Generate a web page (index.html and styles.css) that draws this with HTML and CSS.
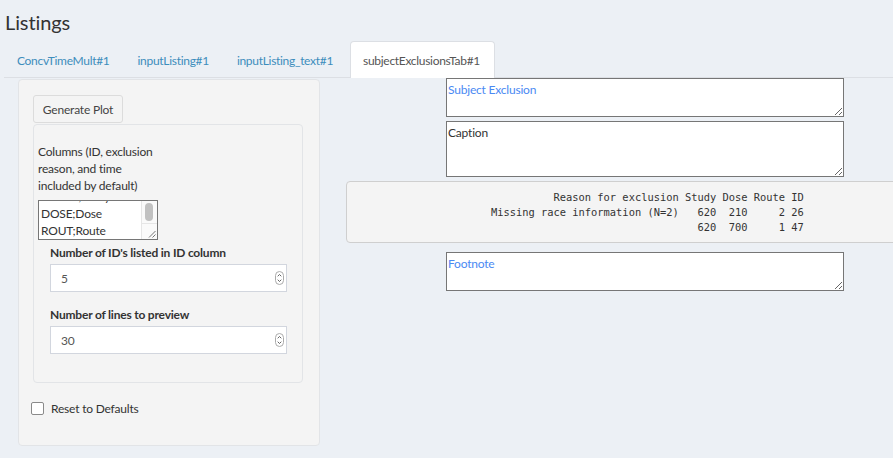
FILE: index.html
```html
<!DOCTYPE html>
<html>
<head>
<meta charset="utf-8">
<link rel="stylesheet" href="styles.css">
</head>
<body>
<h1 class="title">Listings</h1>
<nav class="tabs">
  <a class="tab">ConcvTimeMult#1</a>
  <a class="tab">inputListing#1</a>
  <a class="tab">inputListing_text#1</a>
  <a class="tab active">subjectExclusionsTab#1</a>
</nav>
<main class="content">
  <section class="well sidebar">
    <button class="btn">Generate Plot</button>
    <div class="well inner">
      <p class="help">Columns (ID, exclusion<br>reason, and time<br>included by default)</p>
      <div class="listbox">
        <div class="lines">
          <div class="partial">STUDY;Study</div>
          <div>DOSE;Dose</div>
          <div>ROUT;Route</div>
        </div>
        <div class="scrollbar">
          <div class="track"><div class="thumb"></div></div>
          <div class="corner">
            <svg width="8" height="8" viewBox="0 0 8 8"><path d="M1 7.5 L7.5 1 M4.5 7.5 L7.5 4.5" stroke="#777" stroke-width="1" fill="none"/></svg>
          </div>
        </div>
      </div>
      <div class="field">
        <label class="label">Number of ID's listed in ID column</label>
        <div class="numbox"><span>5</span><span class="spin"><svg width="9" height="14" viewBox="0 0 9 14"><rect x="0.5" y="0.5" width="8" height="13" rx="4" fill="#fff" stroke="#aaa"/><path d="M2.7 5.3 L4.5 3.5 L6.3 5.3 M2.7 8.7 L4.5 10.5 L6.3 8.7" stroke="#555" stroke-width="0.9" fill="none"/></svg></span></div>
      </div>
      <div class="field">
        <label class="label">Number of lines to preview</label>
        <div class="numbox"><span>30</span><span class="spin"><svg width="9" height="14" viewBox="0 0 9 14"><rect x="0.5" y="0.5" width="8" height="13" rx="4" fill="#fff" stroke="#aaa"/><path d="M2.7 5.3 L4.5 3.5 L6.3 5.3 M2.7 8.7 L4.5 10.5 L6.3 8.7" stroke="#555" stroke-width="0.9" fill="none"/></svg></span></div>
      </div>
    </div>
    <label class="check"><span class="box"></span>Reset to Defaults</label>
  </section>
  <section class="output">
    <textarea class="ta short blue">Subject Exclusion</textarea>
    <textarea class="ta tall">Caption</textarea>
    <pre class="table">          Reason for exclusion Study Dose Route ID
Missing race information (N=2)   620  210     2 26
                                 620  700     1 47</pre>
    <textarea class="ta short blue foot">Footnote</textarea>
  </section>
</main>
</body>
</html>
```
FILE: styles.css
```css
html, body {
  margin: 0;
  padding: 0;
}
body {
  background: #ecf0f5;
  font-family: Lato, "Liberation Sans", sans-serif;
  font-size: 12px;
  letter-spacing: -0.2px;
  color: #333;
  overflow: hidden;
  width: 893px;
  height: 458px;
}
.title {
  margin: 0;
  height: 41px;
  box-sizing: border-box;
  padding: 9px 0 0 5px;
  font-size: 20px;
  font-weight: 400;
  letter-spacing: -0.1px;
  line-height: 26px;
  color: #333;
}
.tabs {
  display: flex;
  margin-left: 4px;
  height: 36px;
  border-bottom: 1px solid #dcdfe4;
}
.tab {
  display: flex;
  align-items: center;
  padding: 1px 12px 0 12px;
  margin-right: 2px;
  color: #3c8dbc;
  letter-spacing: -0.3px;
  border: 1px solid transparent;
  border-bottom: none;
  border-radius: 4px 4px 0 0;
}
.tab.active {
  background: #fff;
  color: #555;
  border-color: #dcdfe4;
  margin-bottom: -1px;
  margin-left: 2px;
  padding: 1px 14px 0 12px;
}
.content {
  display: flex;
  align-items: flex-start;
  padding-left: 18px;
}
.well {
  background: #f4f4f4;
  border: 1px solid #e2e4e7;
  border-radius: 4px;
  box-sizing: border-box;
}
.sidebar {
  margin-top: 1px;
  width: 302px;
  height: 367px;
  padding: 15px 16px 0 14px;
}
.btn {
  display: block;
  width: 90px;
  height: 28px;
  font: inherit;
  letter-spacing: inherit;
  color: #444;
  background: #f4f4f4;
  border: 1px solid #dcdcdc;
  border-radius: 3px;
  padding: 0;
}
.inner {
  margin-top: 1px;
  width: 270px;
  height: 259px;
  padding: 18px 4px 0 4px;
}
.help {
  margin: 0;
  line-height: 17px;
}
.listbox {
  margin-top: 6px;
  width: 120px;
  height: 40px;
  box-sizing: border-box;
  border: 1px solid #767676;
  background: #fff;
  display: flex;
  overflow: hidden;
}
.lines {
  flex: 1;
  padding-left: 2px;
  line-height: 17px;
  overflow: hidden;
}
.partial {
  margin-top: -13px;
}
.scrollbar {
  width: 15px;
  display: flex;
  flex-direction: column;
  border-left: 1px solid #e6e6e6;
  background: #fafafa;
}
.track {
  height: 22px;
  padding: 2px 0 0 3px;
  box-sizing: border-box;
}
.thumb {
  width: 8px;
  height: 18px;
  border-radius: 4px;
  background: #c1c1c1;
}
.corner {
  flex: 1;
  border-top: 1px solid #e6e6e6;
  display: flex;
  align-items: flex-end;
  justify-content: flex-end;
  padding: 0 1px 1px 0;
}
.corner svg { display: block; }
.field {
  padding-left: 12px;
  margin-top: 4px;
}
.field + .field {
  margin-top: 14px;
}
.label {
  display: block;
  font-weight: 700;
  line-height: 17px;
  margin-bottom: 3px;
}
.numbox {
  width: 237px;
  height: 28px;
  box-sizing: border-box;
  border: 1px solid #d2d6de;
  background: #fff;
  display: flex;
  align-items: center;
  justify-content: space-between;
  padding: 0 2px 0 10px;
  color: #555;
}
.spin {
  display: flex;
}
.spin svg { display: block; }
.check {
  display: flex;
  align-items: center;
  margin-top: 17px;
  margin-left: -2px;
  line-height: 17px;
}
.box {
  width: 11px;
  height: 11px;
  border: 1px solid #8a8a8a;
  border-radius: 2px;
  background: #fff;
  margin-right: 7px;
}
.output {
  margin-left: 26px;
  display: flex;
  flex-direction: column;
}
.ta {
  display: block;
  margin: 0 0 4px 100px;
  width: 398px;
  box-sizing: border-box;
  border: 1px solid #767676;
  background: #fff;
  font-family: Lato, "Liberation Sans", sans-serif;
  font-size: 12px;
  letter-spacing: -0.2px;
  line-height: 17px;
  padding: 2px 1px;
  color: #333;
  resize: vertical;
}
.short { height: 39px; }
.tall { height: 56px; }
.blue { color: #4a89f3; }
.foot { margin-top: 9px; }
.table {
  margin: 0;
  width: 600px;
  height: 62px;
  box-sizing: border-box;
  background: #f4f4f4;
  border: 1px solid #cfcfcf;
  border-radius: 4px;
  padding: 8px 0 0 144px;
  font-family: "DejaVu Sans Mono", monospace;
  font-size: 10.4px;
  letter-spacing: 0;
  line-height: 15px;
  color: #333;
}
```
